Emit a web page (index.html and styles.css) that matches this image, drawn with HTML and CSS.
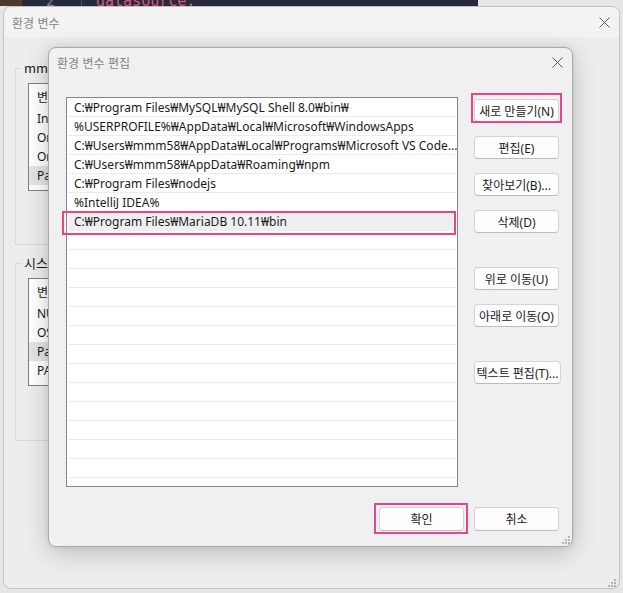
FILE: index.html
```html
<!DOCTYPE html>
<html lang="ko">
<head>
<meta charset="utf-8">
<title>환경 변수 편집</title>
<link rel="stylesheet" href="styles.css">
</head>
<body>
<div class="desk">
  <div class="topstrip"><span class="code-ln">2</span><span class="code-txt">datasource:</span></div>

  <div class="win outer">
    <div class="titlebar">
      <span class="title">환경 변수</span>
      <svg class="close" width="11" height="11" viewBox="0 0 11 11"><path d="M0.5 0.5L10.5 10.5M10.5 0.5L0.5 10.5" stroke="#5a5a5a" stroke-width="1" fill="none"/></svg>
    </div>
    <div class="outer-body">
      <div class="group g1">
        <span class="group-label">mmm58에 대한 사용자 변수(U)</span>
        <div class="minilist">
          <div class="mhead"><span class="cut">변수</span></div>
          <div class="mrow"><span class="cut">IntelliJ IDEA</span></div>
          <div class="mrow"><span class="cut">OneDrive</span></div>
          <div class="mrow"><span class="cut">OneDriveConsumer</span></div>
          <div class="mrow sel"><span class="cut">Path</span></div>
        </div>
      </div>
      <div class="group g2">
        <span class="group-label">시스템 변수(S)</span>
        <div class="minilist">
          <div class="mhead"><span class="cut">변수</span></div>
          <div class="mrow"><span class="cut">NUMBER_OF_PROCESSORS</span></div>
          <div class="mrow"><span class="cut">OS</span></div>
          <div class="mrow sel"><span class="cut">Path</span></div>
          <div class="mrow"><span class="cut">PATHEXT</span></div>
        </div>
      </div>
    </div>
    <svg class="grip grip-outer" width="8" height="8" viewBox="0 0 8 8"><g fill="#b4b4b4"><rect x="6" y="0" width="2" height="2"/><rect x="3" y="3" width="2" height="2"/><rect x="6" y="3" width="2" height="2"/><rect x="0" y="6" width="2" height="2"/><rect x="3" y="6" width="2" height="2"/><rect x="6" y="6" width="2" height="2"/></g></svg>
  </div>

  <div class="win inner">
    <div class="titlebar">
      <span class="title">환경 변수 편집</span>
      <svg class="close" width="11" height="11" viewBox="0 0 11 11"><path d="M0.5 0.5L10.5 10.5M10.5 0.5L0.5 10.5" stroke="#5a5a5a" stroke-width="1" fill="none"/></svg>
    </div>
    <div class="inner-body">
      <div class="pathlist">
        <div class="prow">C:₩Program Files₩MySQL₩MySQL Shell 8.0₩bin₩</div>
        <div class="prow">%USERPROFILE%₩AppData₩Local₩Microsoft₩WindowsApps</div>
        <div class="prow">C:₩Users₩mmm58₩AppData₩Local₩Programs₩Microsoft VS Code...</div>
        <div class="prow">C:₩Users₩mmm58₩AppData₩Roaming₩npm</div>
        <div class="prow">C:₩Program Files₩nodejs</div>
        <div class="prow">%IntelliJ IDEA%</div>
        <div class="prow sel">C:₩Program Files₩MariaDB 10.11₩bin<span class="pink row-mark"></span></div>
        <div class="prow"></div>
        <div class="prow"></div>
        <div class="prow"></div>
        <div class="prow"></div>
        <div class="prow"></div>
        <div class="prow"></div>
        <div class="prow"></div>
        <div class="prow"></div>
        <div class="prow"></div>
        <div class="prow"></div>
        <div class="prow"></div>
        <div class="prow"></div>
        <div class="prow"></div>
      </div>
      <div class="btncol">
        <div class="btn">새로 만들기(N)<span class="pink new-mark"></span></div>
        <div class="btn">편집(E)</div>
        <div class="btn">찾아보기(B)...</div>
        <div class="btn">삭제(D)</div>
        <div class="btn push">위로 이동(U)</div>
        <div class="btn">아래로 이동(O)</div>
        <div class="btn push wide">텍스트 편집(T)...</div>
      </div>
    </div>
    <div class="inner-foot">
      <div class="btn foot">확인<span class="pink ok-mark"></span></div>
      <div class="btn foot">취소</div>
    </div>
    <svg class="grip grip-inner" width="8" height="8" viewBox="0 0 8 8"><g fill="#b4b4b4"><rect x="6" y="0" width="2" height="2"/><rect x="3" y="3" width="2" height="2"/><rect x="6" y="3" width="2" height="2"/><rect x="0" y="6" width="2" height="2"/><rect x="3" y="6" width="2" height="2"/><rect x="6" y="6" width="2" height="2"/></g></svg>
  </div>
</div>
</body>
</html>
```

FILE: styles.css
```css
* { box-sizing: border-box; }

body {
  margin: 0;
  font-family: "Noto Sans", "Noto Sans CJK KR", sans-serif;
  font-size: 12px;
  color: #1b1b1b;
}

.desk {
  position: relative;
  width: 623px;
  height: 593px;
  overflow: hidden;
  background: #e6e6e6;
}

.topstrip {
  height: 6px;
  width: 478px;
  background: linear-gradient(90deg, #4a3b2c 0 22px, #262a3a 22px);
  overflow: hidden;
  white-space: nowrap;
}

.code-ln,
.code-txt {
  display: inline-block;
  vertical-align: top;
  margin-top: -7px;
  font: 15px/16px "DejaVu Sans Mono", monospace;
}

.code-ln {
  margin-left: 46px;
  width: 36px;
  color: #7d8294;
  border-right: 1px solid #4e5366;
}

.code-txt {
  margin-left: 14px;
  color: #d2587c;
}

.win {
  position: absolute;
  border-radius: 8px;
}

.outer {
  left: 3px;
  top: 6px;
  width: 617px;
  height: 583px;
  background: #ededed;
  border: 1px solid #c2c2c2;
  display: flex;
  flex-direction: column;
}

.titlebar {
  display: flex;
  align-items: center;
  justify-content: space-between;
  flex-shrink: 0;
}

.outer .titlebar {
  height: 30px;
  padding: 0 9px 0 8px;
  background: #f3f3f3;
  border-radius: 8px 8px 0 0;
}

.title {
  color: #858585;
  font-size: 12px;
  font-family: "Noto Sans CJK KR", sans-serif;
}

.close { display: block; }

.outer-body {
  flex: 1;
  padding: 31px 0 0 11px;
}

.group {
  position: relative;
  width: 540px;
  border: 1px solid #dadada;
  padding: 14px 0 0 12px;
}

.g1 { height: 177px; }
.g2 { height: 178px; margin-top: 18px; }

.group-label {
  position: absolute;
  top: -10px;
  left: 6px;
  width: 26px;
  overflow: hidden;
  white-space: nowrap;
  padding: 0 0 0 2px;
  background: #ededed;
  line-height: 18px;
  font-size: 13px;
  color: #1b1b1b;
  font-family: "Noto Sans CJK KR", sans-serif;
}

.minilist {
  width: 500px;
  height: 108px;
  border: 1px solid #7f7f7f;
  background: #fff;
}

.cut {
  display: inline-block;
  max-width: 12px;
  overflow: hidden;
  white-space: nowrap;
  vertical-align: top;
}

.mhead {
  height: 25px;
  padding: 3px 0 0 8px;
  line-height: 20px;
  font-family: "Noto Sans CJK KR", sans-serif;
}

.mrow {
  height: 19px;
  line-height: 19px;
  padding-left: 8px;
}

.mrow.sel { background: #e4e4e4; }

.inner {
  left: 48px;
  top: 47px;
  width: 525px;
  height: 500px;
  background: #f0f0f0;
  border: 1px solid #a8a8a8;
  box-shadow: 0 6px 26px rgba(0, 0, 0, 0.2), 0 0 6px rgba(0, 0, 0, 0.08);
  display: flex;
  flex-direction: column;
}

.inner .titlebar {
  height: 28px;
  padding: 0 9px 0 8px;
}

.inner-body {
  display: flex;
  gap: 16px;
  padding: 21px 13px 0 17px;
}

.pathlist {
  width: 392px;
  height: 390px;
  border: 1px solid #85858b;
  background: #fff;
  flex-shrink: 0;
}

.prow {
  position: relative;
  height: 19px;
  margin: 0 1px;
  padding: 1px 0 0 6px;
  border-bottom: 1px solid #ececec;
  line-height: 18px;
  white-space: nowrap;
}

.prow.sel { background: #efefef; }

.pink {
  position: absolute;
  border: 2px solid #e8458b;
  pointer-events: none;
}

.row-mark { left: -6px; right: 0; top: -1px; bottom: -5px; }

.btncol {
  display: flex;
  flex-direction: column;
  gap: 14px;
  padding-top: 2px;
}

.btn {
  position: relative;
  width: 85px;
  height: 23px;
  background: #fdfdfd;
  border: 1px solid #d4d4d4;
  border-bottom-color: #bdbdbd;
  border-radius: 4px;
  display: flex;
  align-items: center;
  justify-content: center;
  white-space: nowrap;
  font-size: 12px;
}

.btn.push { margin-top: 20px; }
.btn.wide { width: 87px; }

.new-mark { top: -7px; left: -4px; right: -4px; bottom: -2px; }

.inner-foot {
  display: flex;
  justify-content: flex-end;
  gap: 10px;
  padding: 20px 13px 0 0;
}

.btn.foot { height: 24px; }

.ok-mark { left: -6px; top: -5px; right: -5px; bottom: -4px; }

.grip { position: absolute; }
.grip-inner { right: 2px; bottom: 2px; }
.grip-outer { right: 3px; bottom: 1px; }
```
